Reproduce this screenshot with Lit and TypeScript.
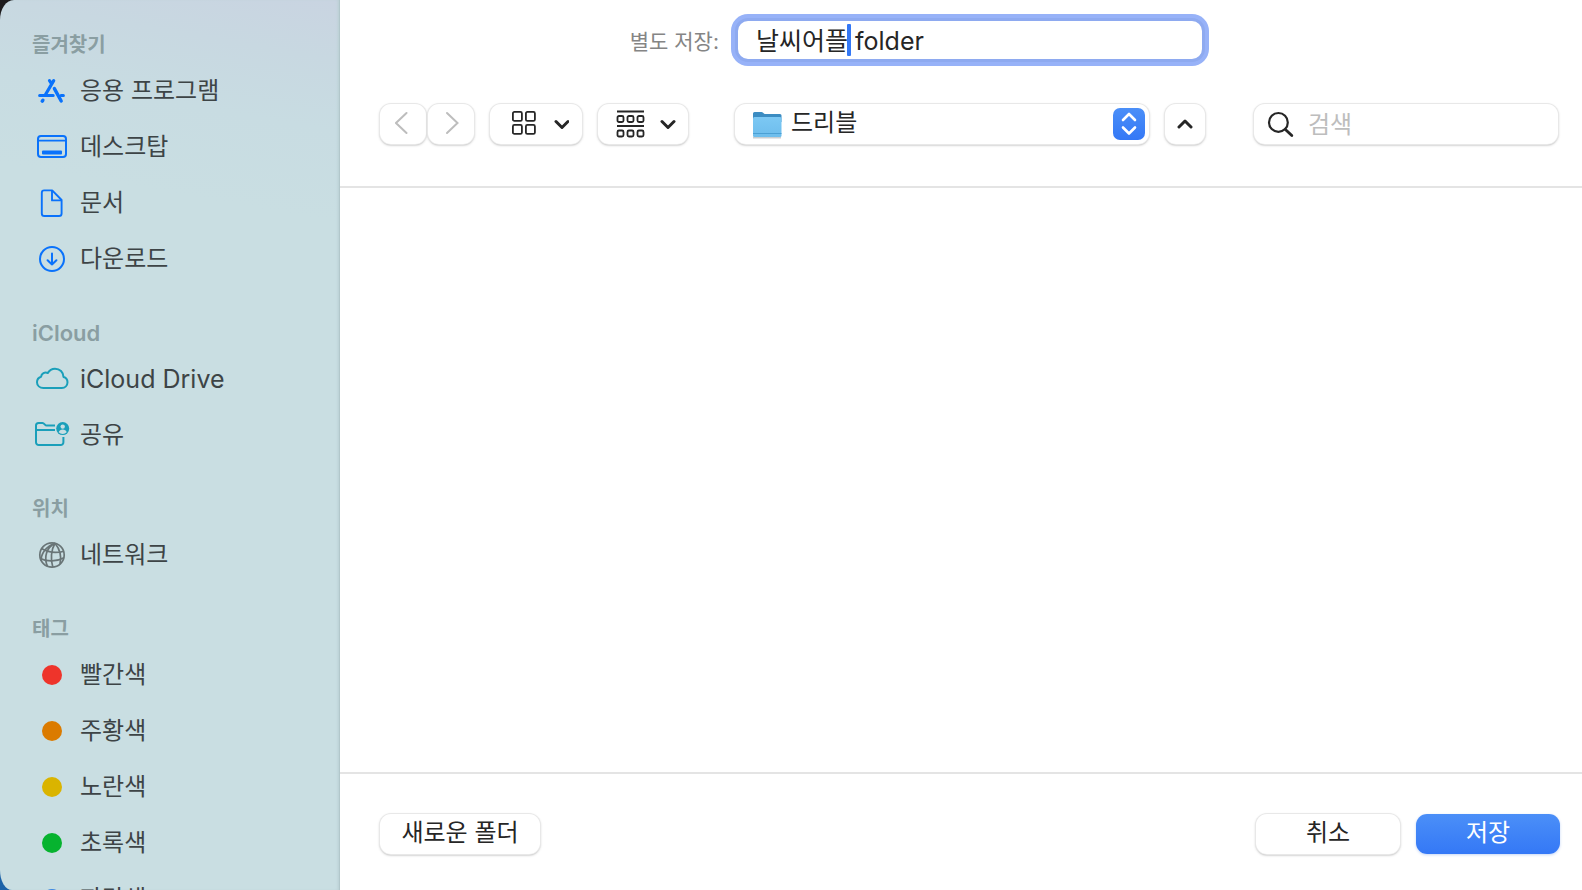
import { LitElement, html, css, svg, nothing } from "lit";
import { customElement, property, state } from "lit/decorators.js";
import { styleMap } from "lit/directives/style-map.js";

type Item = { label: string; icon?: string; color?: string; latin?: boolean };
type Section = { title: string; latin?: boolean; items: Item[] };

const SECTIONS: Section[] = [
  {
    title: "즐겨찾기",
    items: [
      { label: "응용 프로그램", icon: "apps" },
      { label: "데스크탑", icon: "desktop" },
      { label: "문서", icon: "document" },
      { label: "다운로드", icon: "download" },
    ],
  },
  {
    title: "iCloud",
    latin: true,
    items: [
      { label: "iCloud Drive", icon: "cloud", latin: true },
      { label: "공유", icon: "shared" },
    ],
  },
  { title: "위치", items: [{ label: "네트워크", icon: "network" }] },
  {
    title: "태그",
    items: [
      { label: "빨간색", color: "#ee342b" },
      { label: "주황색", color: "#db7b00" },
      { label: "노란색", color: "#dab400" },
      { label: "초록색", color: "#06b32f" },
      { label: "파란색", color: "#3d86e0" },
    ],
  },
];

const icons: Record<string, unknown> = {
  apps: svg`<g stroke="#0a72fb" fill="none" stroke-linecap="round">
    <path stroke-width="3.200" d="M20.700 8.600 12.400 22.800M16.500 8.600l2 3"/>
    <path stroke-width="3" d="M6.600 23.600h13.600M28 23.600h2.400"/>
    <path stroke-width="3.400" d="M21.400 16.600 28.200 29"/>
    <path stroke-width="3.400" d="M9.900 28.200l-.7 1"/></g>`,
  desktop: svg`<g stroke="#0a72fb" fill="none" stroke-width="2">
    <rect x="5" y="8" width="28" height="21" rx="3"/><path d="M5 12.600h28" stroke-width="1.600"/></g>
    <rect x="9" y="22.400" width="20" height="4.200" rx="1" fill="#0a72fb"/>`,
  document: svg`<g stroke="#0a72fb" fill="none" stroke-width="1.900" stroke-linejoin="round">
    <path d="M11.200 6.400h8l9.400 9.600v13.400a2.600 2.600 0 0 1-2.600 2.600H11.400A2.600 2.600 0 0 1 8.800 29.400V8.800a2.400 2.400 0 0 1 2.400-2.400z"/>
    <path d="M19 6.600v9.800h9.400"/></g>`,
  download: svg`<g stroke="#0a72fb" fill="none" stroke-width="2" stroke-linecap="round" stroke-linejoin="round">
    <circle cx="19" cy="19" r="12"/><path d="M19 13.400v11M14.600 20.200l4.400 4.300 4.400-4.300"/></g>`,
  cloud: svg`<path stroke="#1a9fba" fill="none" stroke-width="2" stroke-linejoin="round"
    d="M10.400 28C6.800 28 4 25.600 4 22.200c0-2.600 1.700-4.800 4.100-5.500.3-3.200 3.700-5 6.700-3.700 1.500-2.700 4.200-4.300 7.200-4.300 4.800 0 8.400 3.600 8.500 8.300 2.600.7 4 2.900 4 5.200 0 3.300-2.500 5.800-5.700 5.800z"/>`,
  shared: svg`<g stroke="#1a9fba" fill="none" stroke-width="2">
    <path d="M30.400 21v5.200a2.800 2.800 0 0 1-2.800 2.800H5.800A2.800 2.800 0 0 1 3 26.200V9.600A2.600 2.600 0 0 1 5.600 7H9.500c1.900 0 2.400 2.600 4.200 2.600H22"/>
    <path d="M3 14h19"/></g>
    <circle cx="29.700" cy="12.600" r="6.500" fill="#1a9fba"/>
    <circle cx="29.700" cy="10.600" r="2.200" fill="#c9dee2"/><path d="M25.700 16.200c.6-1.800 2-2.700 4-2.700s3.400.9 4 2.700a5.400 5.400 0 0 1-8 0z" fill="#c9dee2"/>`,
  network: svg`<g stroke="#697577" fill="none" stroke-width="1.700">
    <circle cx="19" cy="19" r="12.200"/>
    <path d="M7.200 22.400c7 3.400 16.500 3.300 23.200-.4M8.600 12.600c6.400 3.800 15.400 4.600 22.400 2.600"/>
    <path d="M22 7.200c-8.600 4.400-11.400 14-7.600 23M22 7.200c-4 6.600-4.600 16.200-2.200 23.800M22 7.200c4.800 5.800 6.800 13.200 5 20.800M8.200 25c-.6-6.800 5-15 13.800-17.800"/></g>`,
};

@customElement("finder-sidebar")
export class FinderSidebar extends LitElement {
  @property({ attribute: false }) sections: Section[] = [];

  static styles = css`
    :host {
      display: block;
      overflow: hidden;
      padding-top: 25px;
      box-sizing: border-box;
      border-radius: 14px 0 0 12px / 20px 0 0 20px;
      background: linear-gradient(190deg, #c9d4e1 0, #c8d8e1 60px, #c8dce2 130px, #c9dee2 220px);
      box-shadow: inset -1px 0 0 #b2c7cb, inset -3px 0 3px -1px #b9cfd3;
    }
    section { margin-bottom: 26px; }
    h2 {
      margin: 0;
      padding: 2px 0 0 32px;
      font-size: 20px;
      font-weight: 600;
      line-height: 36px;
      color: #8a9ea2;
    }
    .latin { font-size: 22px; }
    ul { list-style: none; margin: 0; padding: 0; }
    .item {
      display: flex;
      align-items: center;
      gap: 8px;
      height: 56px;
      padding: 0 32px;
      color: #3d4446;
      font-size: 24px;
      line-height: 36px;
      text-decoration: none;
      white-space: nowrap;
    }
    .item.latin { font-size: 25px; }
    .icon { flex: none; width: 40px; height: 38px; }
    .swatch { flex: none; width: 20px; height: 20px; margin: 0 10px; border-radius: 50%; }
  `;

  render() {
    return html`<nav aria-label="사이드바">
      ${this.sections.map(
        (s) => html`<section>
          <h2 class=${s.latin ? "latin" : ""}>${s.title}</h2>
          <ul>
            ${s.items.map(
              (i) => html`<li>
                <a class="item ${i.latin ? "latin" : ""}" href="#">
                  ${i.color
                    ? html`<span class="swatch" style=${styleMap({ background: i.color })}></span>`
                    : html`<svg class="icon" viewBox="-1 0 40 38" aria-hidden="true">${icons[i.icon!]}</svg>`}
                  <span>${i.label}</span>
                </a>
              </li>`
            )}
          </ul>
        </section>`
      )}
    </nav>`;
  }
}

@customElement("app-root")
export class AppRoot extends LitElement {
  @state() private name = "날씨어플 folder";

  static styles = css`
    :host {
      display: grid;
      grid-template-columns: 340px minmax(0, 1fr);
      height: 100vh;
      overflow: hidden;
      background: linear-gradient(#1d1b1d 50%, #1c62a8 50%);
      font-family: Inter, "Noto Sans CJK KR", sans-serif;
      color: #262626;
    }
    main { display: flex; flex-direction: column; min-width: 0; background: #fff; }
    .head {
      display: grid;
      grid-template-columns: 339px minmax(160px, 1fr) 40px 337px;
      column-gap: 16px;
      row-gap: 42px;
      align-items: center;
      padding: 18px 24px 42px 40px;
      border-bottom: 2px solid #e4e4e4;
    }
    .name-label { justify-self: end; padding-top: 4px; font-size: 21px; line-height: 30px; color: #858585; }
    .name { position: relative; grid-column: 2 / 4; display: flex; }
    .name input {
      flex: 1;
      min-width: 0;
      box-sizing: border-box;
      height: 44px;
      padding: 0 18px 2px;
      border: 3px solid #8eaaf0;
      border-radius: 13px;
      box-shadow: 0 0 0 4px #97b2f8;
      outline: none;
      background: #fff;
      font: inherit;
      font-size: 25px;
      color: inherit;
    }
    .caret { position: absolute; left: 112px; top: 6px; width: 4px; height: 32px; border-radius: 1px; background: #3478f6; }
    .tools { grid-column: 1; display: flex; }
    button, select, input { font-family: inherit; margin: 0; }
    .control {
      display: flex;
      align-items: center;
      justify-content: center;
      box-sizing: border-box;
      height: 40px;
      padding: 0;
      border: 0;
      border-radius: 11px;
      background: #fff;
      color: inherit;
      font-size: 24px;
      box-shadow: 0 0 0 1px #e8e8e8, 0 1px 1px #b4b4b4, 0 1px 3px #b4b4b4;
    }
    .nav { width: 46px; margin-right: 2px; }
    .view { width: 92px; margin-left: 14px; padding-left: 7px; }
    .group { width: 90px; margin-left: 16px; padding-left: 6px; }
    .popup { position: relative; }
    .popup select {
      appearance: none;
      width: 100%;
      padding: 0 56px 3px;
      display: block;
    }
    .folder { position: absolute; left: 16px; top: 4px; width: 32px; height: 32px; pointer-events: none; }
    .stepper { position: absolute; right: 4px; top: 4px; width: 32px; height: 32px; pointer-events: none; }
    .search { position: relative; justify-self: end; width: 304px; }
    .search input { width: 100%; padding: 0 16px 0 54px; outline: none; }
    .search input::placeholder { color: #bdbdbd; opacity: 1; }
    .search svg { position: absolute; left: 13px; top: 7px; width: 28px; height: 28px; pointer-events: none; }
    .files { flex: 1; min-height: 0; }
    .foot {
      display: flex;
      align-items: center;
      gap: 16px;
      padding: 40px 22px 36px 40px;
      border-top: 2px solid #e4e4e4;
    }
    .foot .control { width: 144px; padding-bottom: 7px; }
    .foot .new { width: 160px; margin-right: auto; }
    .foot .save {
      color: #fff;
      background: linear-gradient(#4b8ff8, #3478f6);
      box-shadow: 0 1px 3px #c5d6f5;
    }
  `;

  private chevron(up = false) {
    return svg`<path d=${up ? "M2 8l6-6 6 6" : "M2 2l6 6 6-6"} fill="none" stroke="#262626" stroke-width="3" stroke-linecap="round" stroke-linejoin="round"/>`;
  }

  render() {
    const cells = [0, 1, 2];
    return html`
      <finder-sidebar .sections=${SECTIONS}></finder-sidebar>
      <main>
        <header class="head">
          <label class="name-label" for="name">별도 저장:</label>
          <div class="name">
            <input id="name" type="text" .value=${this.name}
              @input=${(e: Event) => (this.name = (e.target as HTMLInputElement).value)} />
            ${this.name ? html`<span class="caret"></span>` : nothing}
          </div>
          <div class="tools">
            <button class="control nav" aria-label="뒤로">
              <svg width="16" height="26" viewBox="0 0 16 26"><path d="M11.500 2 1 12l10.500 10" fill="none" stroke="#bdbdbd" stroke-width="2" stroke-linecap="round"/></svg>
            </button>
            <button class="control nav" aria-label="앞으로">
              <svg width="16" height="26" viewBox="0 0 16 26"><path d="M4 2l10.500 10L4 22" fill="none" stroke="#bdbdbd" stroke-width="2" stroke-linecap="round"/></svg>
            </button>
            <button class="control view" aria-label="아이콘 보기">
              <svg width="58" height="28" viewBox="0 0 58 28">
                <g fill="none" stroke="#262626" stroke-width="1.800">
                  ${[0, 13].map((y) => [0, 13].map((x) => svg`<rect x=${x + 1.9} y=${y + 1.9} width="9" height="9" rx="1.500"/>`))}
                </g>
                <g transform="translate(43 9.500)">${this.chevron()}</g>
              </svg>
            </button>
            <button class="control group" aria-label="항목 그룹화">
              <svg width="60" height="28" viewBox="0 0 60 28">
                <path d="M1 1.500h27M1 16h27" stroke="#262626" stroke-width="2"/>
                <g fill="none" stroke="#262626" stroke-width="1.800">
                  ${[6, 20.5].map((y) => cells.map((c) => svg`<rect x=${c * 10 + 1.5} y=${y} width="6" height="6" rx="1.500"/>`))}
                </g>
                <g transform="translate(44 9.500)">${this.chevron()}</g>
              </svg>
            </button>
          </div>
          <div class="popup">
            <select class="control" aria-label="위치"><option>드리블</option></select>
            <svg class="folder" viewBox="0 0 32 32" aria-hidden="true">
              <defs><linearGradient id="f" x1="0" y1="0" x2="0" y2="1"><stop offset="0" stop-color="#7cc8f4"/><stop offset="1" stop-color="#6dbdec"/></linearGradient></defs>
              <path d="M2 29.500h28" stroke="#c7cdd1" stroke-width="2"/>
              <path d="M2 5.500A1.500 1.500 0 0 1 3.500 4h7c1.500 0 2 2 3.500 2H29a1.500 1.500 0 0 1 1.500 1.500V14H2z" fill="#3b8cc2"/>
              <path d="M2 10.500A1.500 1.500 0 0 1 3.500 9H29a1.500 1.500 0 0 1 1.500 1.500v17A1.500 1.500 0 0 1 29 29H3.500A1.500 1.500 0 0 1 2 27.500z" fill="url(#f)"/>
              <path d="M2 25.500h28.500" stroke="#4ba0d4" stroke-width="1"/>
            </svg>
            <svg class="stepper" viewBox="0 0 32 32" aria-hidden="true">
              <defs><linearGradient id="s" x1="0" y1="0" x2="0" y2="1"><stop offset="0" stop-color="#4b8ff8"/><stop offset="1" stop-color="#3478f6"/></linearGradient></defs>
              <rect width="32" height="32" rx="7" fill="url(#s)"/>
              <path d="M10 12l6-6 6 6M10 19.500l6 6 6-6" fill="none" stroke="#fff" stroke-width="2.600" stroke-linecap="round" stroke-linejoin="round"/>
            </svg>
          </div>
          <button class="control" aria-label="접기">
            <svg width="16" height="10" viewBox="0 0 16 10">${this.chevron(true)}</svg>
          </button>
          <div class="search">
            <input class="control" type="text" aria-label="검색" placeholder="검색" />
            <svg viewBox="0 0 28 28" aria-hidden="true"><g fill="none" stroke="#262626" stroke-linecap="round"><circle cx="11.400" cy="11.400" r="9.400" stroke-width="2.200"/><path d="M18.400 18.400l6.400 6.200" stroke-width="2.800"/></g></svg>
          </div>
        </header>
        <div class="files"></div>
        <footer class="foot">
          <button class="control new">새로운 폴더</button>
          <button class="control">취소</button>
          <button class="control save">저장</button>
        </footer>
      </main>
    `;
  }
}
